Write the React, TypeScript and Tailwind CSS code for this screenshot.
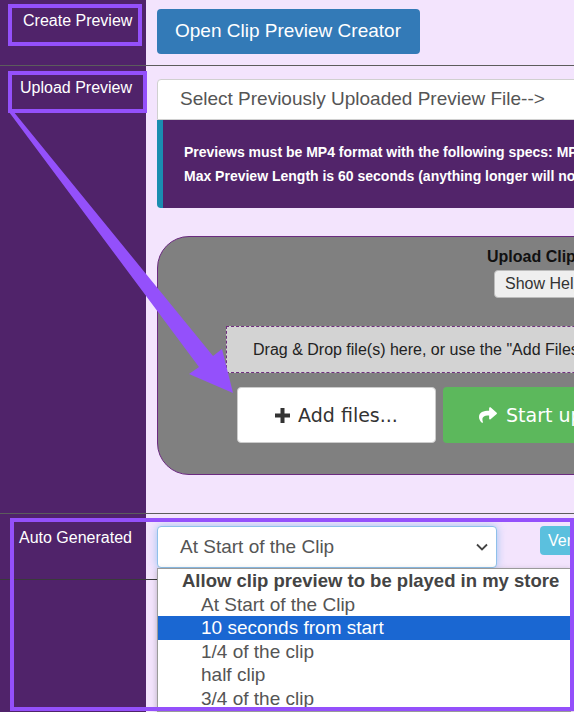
import React from "react";
import { FaShare } from "react-icons/fa";

function PlusIcon() {
  return (
    <svg width="15" height="15" viewBox="0 0 15 15" className="shrink-0">
      <rect x="5.5" y="0" width="4" height="15" fill="#333" />
      <rect x="0" y="5.5" width="15" height="4" fill="#333" />
    </svg>
  );
}

export default function App() {
  return (
    <div className="relative h-[712px] w-[574px] overflow-hidden bg-[#f3e4fd] font-['Liberation_Sans',Arial,sans-serif]">
      <div className="flex h-full flex-col">
        {/* Row 1 */}
        <div className="flex h-[66px] shrink-0 border-b border-[#5c5c5c]">
          <div className="w-[146px] shrink-0 bg-[#50236a] pl-[23px] pt-[12px] text-[16px] leading-[18px] text-white">
            Create Preview
          </div>
          <div className="pl-[11px] pt-[9px]">
            <button className="h-[45px] w-[263px] rounded-[4px] bg-[#337ab7] pl-[18px] text-left text-[19px] text-white">
              Open Clip Preview Creator
            </button>
          </div>
        </div>

        {/* Row 2 */}
        <div className="flex h-[448px] shrink-0 border-b border-[#5c5c5c]">
          <div className="w-[146px] shrink-0 bg-[#50236a] pl-[20px] pt-[13px] text-[16px] leading-[18px] text-white">
            Upload Preview
          </div>
          <div className="flex flex-col pl-[11px] pt-[13px]">
            <div className="flex h-[41px] w-[440px] shrink-0 items-center rounded-t-[4px] border border-[#d0d0d0] bg-white pl-[22px] text-[19px] text-[#555] whitespace-nowrap">
              Select Previously Uploaded Preview File--&gt;
            </div>
            <div className="h-[88px] w-[440px] shrink-0 rounded-bl-[4px] border-l-[6px] border-[#1a8db0] bg-[#52246a] pl-[21px] pt-[20px] text-[14px] font-bold leading-[24px] text-white whitespace-nowrap">
              <div>Previews must be MP4 format with the following specs: MP4</div>
              <div>Max Preview Length is 60 seconds (anything longer will not</div>
            </div>
            <div className="mt-[28px] flex h-[239px] w-[560px] shrink-0 flex-col rounded-l-[32px] border border-[#6b2a80] bg-[#808080]">
              <div className="ml-[329px] mt-[11px] text-[16px] font-bold leading-[18px] text-[#111] whitespace-nowrap">
                Upload Clip
              </div>
              <div className="ml-[336px] mt-[4px] flex h-[28px] w-[110px] shrink-0 items-center rounded-[4px] border border-[#bbb] bg-[#efefef] pl-[10px] text-[16px] text-[#333] whitespace-nowrap">
                Show Help
              </div>
              <div className="ml-[68px] mt-[28px] flex h-[47px] w-[500px] shrink-0 items-center border border-dashed border-[#70307f] bg-[#d3d3d3] pl-[26px] text-[16px] text-[#222] whitespace-nowrap">
                Drag &amp; Drop file(s) here, or use the "Add Files..." button
              </div>
              <div className="ml-[79px] mt-[14px] flex shrink-0 gap-[7px] font-['DejaVu_Sans',Verdana,sans-serif]">
                <button className="flex h-[56px] w-[199px] shrink-0 items-center justify-center gap-[8px] rounded-[4px] border border-[#ccc] bg-white text-[19px] text-[#333]">
                  <PlusIcon />
                  <span>Add files...</span>
                </button>
                <button className="flex h-[56px] w-[200px] shrink-0 items-center gap-[8px] rounded-[4px] bg-[#5cb85c] pl-[35px] text-[19px] text-white whitespace-nowrap">
                  <FaShare className="h-[18px] w-[20px] shrink-0" />
                  <span>Start upload</span>
                </button>
              </div>
            </div>
          </div>
        </div>

        {/* Row 3 */}
        <div className="flex h-[66px] shrink-0 border-b border-[#3a3a3a]">
          <div className="w-[146px] shrink-0 bg-[#50236a] pl-[19px] pt-[15px] text-[16px] leading-[18px] text-white">
            Auto Generated
          </div>
          <div className="flex items-start pl-[11px] pt-[12px]">
            <div className="flex h-[42px] w-[340px] shrink-0 items-center justify-between rounded-[4px] border border-[#8fc0ea] bg-white pl-[22px] pr-[8px] text-[19px] text-[#555] shadow-[0_0_8px_rgba(102,175,233,0.6)]">
              <span>At Start of the Clip</span>
              <svg width="12" height="8" viewBox="0 0 12 8">
                <polyline points="1,1.5 6,6.5 11,1.5" fill="none" stroke="#444" strokeWidth="1.8" />
              </svg>
            </div>
            <button className="ml-[43px] flex h-[29px] w-[70px] shrink-0 items-center rounded-[4px] bg-[#5bc0de] pl-[8px] text-[16px] text-white">
              Verify
            </button>
          </div>
        </div>

        {/* Row 4 */}
        <div className="flex flex-1">
          <div className="w-[146px] shrink-0 bg-[#50236a]" />
        </div>
      </div>

      {/* open dropdown list */}
      <div className="absolute left-[157px] top-[568px] w-[414px] border border-[#9a9a9a] bg-white text-[19px] leading-[23.6px] text-[#555] shadow-[0_2px_6px_rgba(0,0,0,0.25)]">
        <div className="pl-[24px] text-[18.5px] font-bold text-[#444] whitespace-nowrap">
          Allow clip preview to be played in my store
        </div>
        <div className="pl-[43px]">At Start of the Clip</div>
        <div className="bg-[#1a67d2] pl-[43px] text-white">10 seconds from start</div>
        <div className="pl-[43px]">1/4 of the clip</div>
        <div className="pl-[43px]">half clip</div>
        <div className="pl-[43px]">3/4 of the clip</div>
      </div>

      {/* annotation boxes */}
      <div className="pointer-events-none absolute left-[8px] top-[4px] h-[42px] w-[134px] border-[4px] border-[#9450fb]" />
      <div className="pointer-events-none absolute left-[8px] top-[71px] h-[42px] w-[139px] border-[4px] border-[#9450fb]" />
      <div className="pointer-events-none absolute left-[10px] top-[518px] h-[193px] w-[564px] border-[4px] border-[#9450fb]" />

      {/* annotation arrow */}
      <svg className="pointer-events-none absolute left-0 top-0" width="574" height="712">
        <polygon
          points="9,112 13,111 213,356 222,349 233,393 189,374 199,367"
          fill="#9450fb"
        />
      </svg>
    </div>
  );
}
